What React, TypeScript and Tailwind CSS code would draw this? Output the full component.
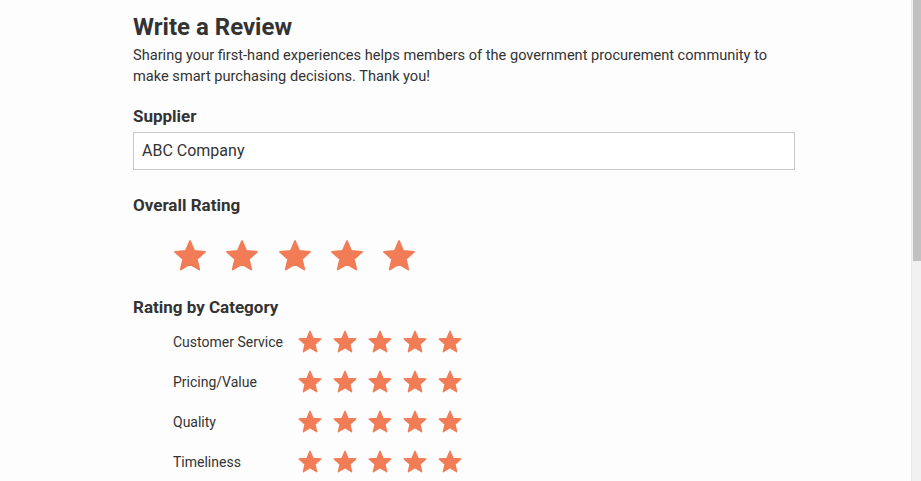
import React from "react";

const STAR = "M12 17.27L18.18 21l-1.64-7.03L22 9.24l-7.19-.61L12 2 9.19 8.63 2 9.24l5.46 4.73L5.82 21z";

function Star({ size }: { size: number }) {
  return (
    <svg width={size} height={size} viewBox="0 0 24 24" className="shrink-0">
      <path d={STAR} fill="#f17c56" stroke="#f17c56" strokeWidth={1.2} strokeLinejoin="round" />
    </svg>
  );
}

const categories = ["Customer Service", "Pricing/Value", "Quality", "Timeliness"];

export default function App() {
  return (
    <div
      className="flex h-[481px] w-[921px] overflow-hidden bg-[#fdfdfd] text-[#333333]"
      style={{ fontFamily: "Roboto, 'Liberation Sans', sans-serif" }}
    >
      <div className="flex-1">
        <div className="ml-[133px] w-[662px] pt-[11px]">
          <h1 className="text-[24px] font-bold leading-[32px]">Write a Review</h1>
          <p className="mt-[2px] text-[14.6px] leading-[21px]">
            Sharing your first-hand experiences helps members of the government procurement community to
            make smart purchasing decisions. Thank you!
          </p>
          <div className="mt-[17px] text-[17px] font-bold leading-[24px]">Supplier</div>
          <div className="mt-[4px] flex h-[38px] items-center border border-[#c8c8c8] bg-white px-[8px] text-[16px]">
            ABC Company
          </div>
          <div className="mt-[23px] text-[17px] font-bold leading-[24px]">Overall Rating</div>
          <div className="mt-[21px] flex gap-[16.25px] pl-[39px]">
            {[0, 1, 2, 3, 4].map((i) => (
              <Star key={i} size={36} />
            ))}
          </div>
          <div className="mt-[21px] text-[17px] font-bold leading-[24px]">Rating by Category</div>
          <div className="mt-[3px] flex flex-col pl-[40px]">
            {categories.map((c) => (
              <div key={c} className="flex h-[40px] items-center">
                <div className="w-[124px] text-[14px]">{c}</div>
                <div className="flex gap-[9px]">
                  {[0, 1, 2, 3, 4].map((i) => (
                    <Star key={i} size={26} />
                  ))}
                </div>
              </div>
            ))}
          </div>
        </div>
      </div>
      <div className="flex w-[10px] justify-end border-l border-[#e8e8e8] bg-[#f1f1f1]">
        <div className="h-[261px] w-[8px] bg-[#c1c1c1]" />
      </div>
    </div>
  );
}
